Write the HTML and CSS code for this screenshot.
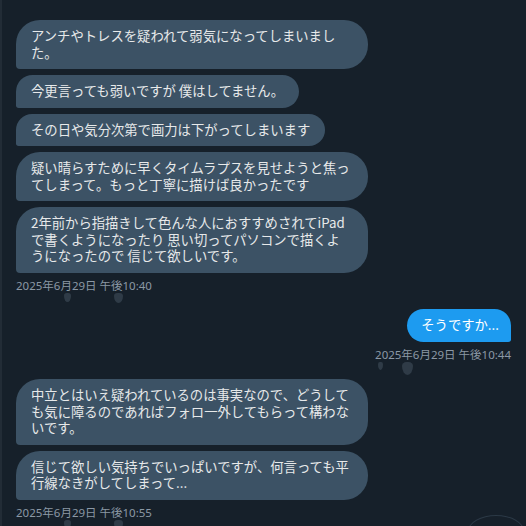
FILE: index.html
```html
<!DOCTYPE html>
<html lang="ja">
<head>
    <meta charset="UTF-8">
    <meta name="viewport" content="width=device-width, initial-scale=1.0">
    <title>メッセージ</title>
    <link rel="stylesheet" href="styles.css">
</head>
<body>
    <div class="thread">
        <!-- received -->
        <div class="group received">
            <div class="bubble">アンチやトレスを疑われて弱気になってしまいました。</div>
            <div class="bubble">今更言っても弱いですが 僕はしてません。</div>
            <div class="bubble">その日や気分次第で画力は下がってしまいます</div>
            <div class="bubble">疑い晴らすために早くタイムラプスを見せようと焦ってしまって。もっと丁寧に描けば良かったです</div>
            <div class="bubble">2年前から指描きして色んな人におすすめされてiPadで書くようになったり 思い切ってパソコンで描くようになったので 信じて欲しいです。</div>
            <div class="time">2025年6月29日 午後10:40<span class="drop d1"></span><span class="drop d2"></span></div>
        </div>

        <!-- sent -->
        <div class="group sent">
            <div class="bubble">そうですか...</div>
            <div class="time">2025年6月29日 午後10:44<span class="drop d3"></span><span class="drop d4"></span></div>
        </div>

        <!-- received -->
        <div class="group received">
            <div class="bubble">中立とはいえ疑われているのは事実なので、どうしても気に障るのであればフォロ一外してもらって構わないです。</div>
            <div class="bubble">信じて欲しい気持ちでいっぱいですが、何言っても平行線なきがしてしまって...</div>
            <div class="time">2025年6月29日 午後10:55<span class="drop d1"></span><span class="drop d2"></span></div>
        </div>
    </div>
    <div class="fab"></div>
</body>
</html>
```

FILE: styles.css
```css
body {
    margin: 0;
    padding: 0;
    width: 526px;
    height: 526px;
    overflow: hidden;
    position: relative;
    background-color: #16202a;
    color: #e7e9ea;
    font-family: "Noto Sans CJK JP", "Noto Sans", sans-serif;
    border-left: 2px solid #222c36;
    box-sizing: border-box;
}

.thread {
    display: flex;
    flex-direction: column;
    gap: 15px;
    padding: 20px 15px 0 14px;
}

.group {
    display: flex;
    flex-direction: column;
    gap: 6px;
}

.group.received {
    align-items: flex-start;
}

.group.sent {
    align-items: flex-end;
    margin-bottom: 1px;
}

.bubble {
    max-width: 352px;
    box-sizing: border-box;
    padding: 8px 15px;
    font-size: 13.33px;
    line-height: 16.5px;
    border-radius: 24px;
}

.received .bubble {
    background-color: #3c5265;
    border-bottom-left-radius: 4px;
}

.sent .bubble {
    background-color: #1d9bf0;
    color: #ffffff;
    padding: 8px 12px 9px 14px;
    border-bottom-right-radius: 4px;
}

.time {
    position: relative;
    margin-top: -1px;
    font-family: "Noto Sans", "Noto Sans CJK JP", sans-serif;
    font-size: 11.5px;
    line-height: 16px;
    color: #8b98a5;
}

/* faint drop marks under the timestamps */
.drop {
    position: absolute;
    top: 15px;
    width: 7px;
    height: 9px;
    background-color: #2f3b47;
    border-radius: 40% 40% 50% 50% / 30% 30% 70% 70%;
}

.drop.d1 { left: 48px; }
.drop.d2 { left: 98px; width: 9px; height: 10px; }
.drop.d3 { left: 3px; width: 5px; height: 8px; }
.drop.d4 { left: 27px; width: 11px; height: 13px; }

.fab {
    position: absolute;
    left: 466px;
    top: 515px;
    width: 54px;
    height: 30px;
    border: 1px solid #2b3946;
    border-radius: 50%;
}
```
